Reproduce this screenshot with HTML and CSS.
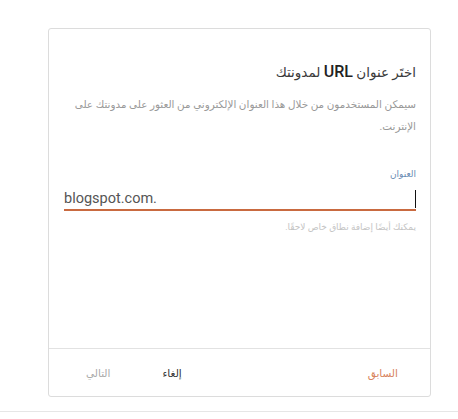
FILE: index.html
```html
<!DOCTYPE html>
<html lang="ar">
<head>
<meta charset="utf-8">
<title>عنوان المدونة</title>
<link rel="stylesheet" href="styles.css">
</head>
<body>
  <div class="dialog" dir="rtl">
    <div class="dialog-body">
      <h2 class="dialog-title">اختَر عنوان <span class="latin">URL</span> لمدونتك</h2>
      <p class="dialog-desc">سيمكن المستخدمون من خلال هذا العنوان الإلكتروني من العثور على مدونتك على الإنترنت.</p>
      <label class="field-label">العنوان</label>
      <div class="field-input">
        <span class="caret"></span>
        <span class="suffix" dir="ltr">blogspot.com.</span>
      </div>
      <p class="field-hint">يمكنك أيضًا إضافة نطاق خاص لاحقًا.</p>
    </div>
    <div class="dialog-actions">
      <button class="btn btn-back">السابق</button>
      <div class="actions-end">
        <button class="btn btn-cancel">إلغاء</button>
        <button class="btn btn-next">التالي</button>
      </div>
    </div>
  </div>
  <div class="page-rule"></div>
</body>
</html>
```

FILE: styles.css
```css
html, body {
  margin: 0;
  padding: 0;
  background: #ffffff;
}

body {
  font-family: Roboto, "DejaVu Sans", "Noto Sans", sans-serif;
  padding-top: 28px;
}

.dialog {
  margin-left: 48px;
  width: 383px;
  height: 369px;
  box-sizing: border-box;
  border: 1px solid #dcdcdc;
  border-radius: 3px;
  display: flex;
  flex-direction: column;
}

.dialog-body {
  flex: 1;
  padding: 31px 14px 0 15px;
  display: flex;
  flex-direction: column;
}

.dialog-title {
  margin: 0;
  font-size: 13.5px;
  font-weight: normal;
  line-height: 24px;
  color: #3a3a3a;
}

.latin {
  font-family: Roboto, sans-serif;
  font-weight: 500;
  font-size: 16px;
  color: #222;
}

.dialog-desc {
  margin: 10px 0 0;
  font-size: 10.4px;
  line-height: 22px;
  color: #999;
}

.field-label {
  margin-top: 29px;
  font-size: 9px;
  line-height: 14px;
  color: #6a8cb3;
}

.field-input {
  margin-top: 7px;
  display: flex;
  align-items: center;
  height: 21px;
  border-bottom: 2px solid #c96a40;
}

.caret {
  width: 1.5px;
  height: 18px;
  background: #111;
  margin-top: 1px;
}

.suffix {
  margin-right: auto;
  font-family: Roboto, sans-serif;
  font-size: 14.5px;
  line-height: 20px;
  color: #555;
}

.field-hint {
  margin: 10px 0 0;
  font-size: 9px;
  line-height: 12px;
  color: #c4c4c4;
}

.dialog-actions {
  height: 47px;
  border-top: 1px solid #e2e2e2;
  display: flex;
  align-items: center;
  justify-content: space-between;
  padding: 0 32px 0 37px;
}

.actions-end {
  display: flex;
  align-items: center;
  gap: 52px;
}

.btn {
  background: none;
  border: none;
  padding: 0;
  font-family: "DejaVu Sans", sans-serif;
  font-size: 10.5px;
  line-height: 16px;
  cursor: pointer;
}

.btn-back {
  color: #d88460;
}

.btn-cancel {
  color: #333;
}

.btn-next {
  color: #aaa;
}

.page-rule {
  margin-top: 14px;
  border-top: 1px solid #e6e6e6;
}
```
